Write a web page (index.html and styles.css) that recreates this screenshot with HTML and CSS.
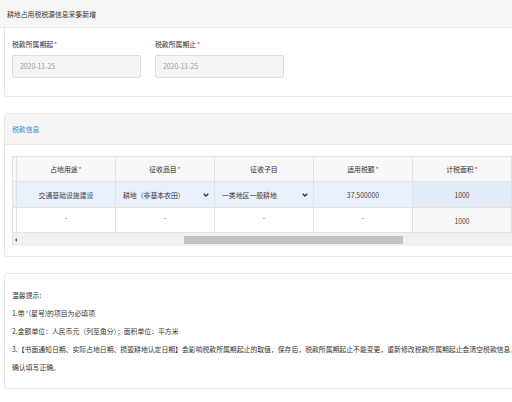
FILE: index.html
```html
<!DOCTYPE html>
<html lang="zh-CN">
<head>
<meta charset="utf-8">
<title>耕地占用税税源信息采集新增</title>
<link rel="stylesheet" href="styles.css">
</head>
<body>
<div class="page">
  <div class="topbar">耕地占用税税源信息采集新增</div>

  <div class="card card-period">
    <div class="field">
      <div class="label">税款所属期起<span class="req">*</span></div>
      <div class="input">2020-11-25</div>
    </div>
    <div class="field">
      <div class="label">税款所属期止<span class="req">*</span></div>
      <div class="input">2020-11-25</div>
    </div>
  </div>

  <div class="card card-tax">
    <div class="card-head">税款信息</div>
    <div class="card-body">
      <div class="grid">
        <div class="row head">
          <div class="cell c0"></div>
          <div class="cell">占地用途<span class="req">*</span></div>
          <div class="cell">征收品目<span class="req">*</span></div>
          <div class="cell">征收子目</div>
          <div class="cell">适用税额<span class="req">*</span></div>
          <div class="cell area">计税面积<span class="req">*</span></div>
          <div class="cell last"></div>
        </div>
        <div class="row sel">
          <div class="cell c0"></div>
          <div class="cell">交通基础设施建设</div>
          <div class="cell select"><span>耕地（非基本农田）</span><svg class="chev" width="6" height="4" viewBox="0 0 6 4"><path d="M0.7 0.7 L3 3 L5.3 0.7" fill="none" stroke="#333" stroke-width="1.3"/></svg></div>
          <div class="cell select"><span>一类地区一般耕地</span><svg class="chev" width="6" height="4" viewBox="0 0 6 4"><path d="M0.7 0.7 L3 3 L5.3 0.7" fill="none" stroke="#333" stroke-width="1.3"/></svg></div>
          <div class="cell">37.500000</div>
          <div class="cell area">1000</div>
          <div class="cell last"></div>
        </div>
        <div class="row plain">
          <div class="cell c0"></div>
          <div class="cell dash">-</div>
          <div class="cell dash">-</div>
          <div class="cell dash">-</div>
          <div class="cell dash">-</div>
          <div class="cell area ro">1000</div>
          <div class="cell last"></div>
        </div>
        <div class="hscroll">
          <span class="arrow"></span>
          <span class="thumb"></span>
        </div>
      </div>
    </div>
  </div>

  <div class="card card-tips">
    <p>温馨提示:</p>
    <p>1.带<span class="req">*</span>(星号)的项目为必填项</p>
    <p>2.金额单位：人民币元（列至角分）；面积单位：平方米</p>
    <p>3.【书面通知日期、实际占地日期、损毁耕地认定日期】会影响税款所属期起止的取值，保存后，税款所属期起止不能变更，重新修改税款所属期起止会清空税款信息，请<br>确认填写正确。</p>
  </div>
</div>
</body>
</html>
```

FILE: styles.css
```css
html, body {
  margin: 0;
  padding: 0;
  overflow: hidden;
  background: #fff;
}
body {
  font-family: "Noto Sans CJK SC", "Noto Sans", sans-serif;
  font-size: 6.85px;
  color: #2b2b2b;
}
.page {
  width: 600px;
}
.topbar {
  height: 27px;
  line-height: 28px;
  padding-left: 7px;
  background: #f6f6f6;
  border-bottom: 1px solid #ececec;
  color: #333;
}
.req {
  color: #e8383d;
  margin-left: 1px;
}
.card {
  width: 525px;
  box-sizing: border-box;
  margin: 0 0 16px 4px;
  border: 1px solid #e6e6e6;
  border-radius: 3px;
  background: #fff;
}
.card-period {
  display: flex;
  gap: 14px;
  padding: 11px 7px 18px 7px;
  border-top: none;
  border-radius: 0 0 3px 3px;
}
.field {
  width: 129px;
}
.label {
  height: 10px;
  line-height: 10px;
  margin-bottom: 6px;
  color: #2b2b2b;
}
.input {
  box-sizing: border-box;
  height: 23px;
  line-height: 21px;
  padding-left: 7px;
  border: 1px solid #dcdcdc;
  border-radius: 2px;
  background: #f5f5f5;
  color: #999;
}
.card-head {
  height: 30px;
  line-height: 31px;
  padding-left: 7px;
  background: #f5f5f5;
  border-bottom: 1px solid #e6e6e6;
  color: #2f8ad8;
}
.card-body {
  padding: 11px 0 10px 7px;
}
.grid {
  width: 560px;
  border-top: 1px solid #e3e3e3;
  border-left: 1px solid #e3e3e3;
}
.row {
  display: flex;
  border-bottom: 1px solid #e3e3e3;
}
.row.head {
  height: 24px;
  background: #f8f8f8;
}
.row.sel {
  height: 25px;
  background: #e9f1fc;
}
.row.plain {
  height: 24px;
  background: #fff;
}
.cell {
  box-sizing: border-box;
  width: 99px;
  border-right: 1px solid #e3e3e3;
  display: flex;
  align-items: center;
  justify-content: center;
  color: #444;
}
.row.head .cell {
  color: #2b2b2b;
}
.cell.c0 {
  width: 4px;
}
.cell.last {
  width: 60px;
  border-right: none;
}
.row.sel .cell.area {
  background: #e3edfa;
}
.cell.ro {
  background: #f7f7f7;
  padding-top: 2px;
}
.cell.dash {
  padding-bottom: 6px;
}
.cell.select {
  justify-content: space-between;
  padding: 0 5px 0 7px;
  color: #333;
}
.chev {
  display: block;
}
.hscroll {
  position: relative;
  height: 13px;
  background: #f1f1f1;
}
.arrow {
  position: absolute;
  left: 2px;
  top: 5px;
  width: 0;
  height: 0;
  border-top: 2px solid transparent;
  border-bottom: 2px solid transparent;
  border-right: 2px solid #555;
}
.thumb {
  position: absolute;
  left: 171px;
  top: 3px;
  width: 219px;
  height: 8px;
  background: #c1c1c1;
}
.card-tips {
  padding: 12px 7px 12px 7px;
  width: 560px;
}
.card-tips p {
  margin: 0;
  line-height: 18px;
  color: #333;
  white-space: nowrap;
}
```
